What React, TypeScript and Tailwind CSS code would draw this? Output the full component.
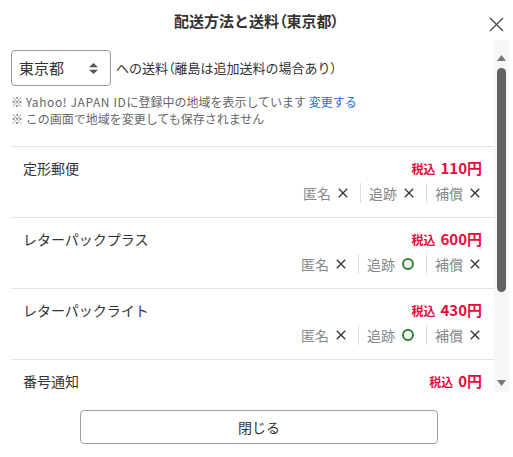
import React from "react";

const FONT = { fontFamily: '"Noto Sans CJK JP", "Noto Sans", sans-serif' };

function Cross() {
  return (
    <svg width="10" height="10" viewBox="0 0 10 10" className="shrink-0">
      <path d="M0.8 0.8 L9.2 9.2 M9.2 0.8 L0.8 9.2" stroke="#333" strokeWidth="1.3" fill="none" />
    </svg>
  );
}

function Circle() {
  return (
    <svg width="12" height="12" viewBox="0 0 12 12" className="shrink-0">
      <circle cx="6" cy="6" r="5" stroke="#2b7f2d" strokeWidth="1.9" fill="none" />
    </svg>
  );
}

type Row = { name: string; price: string; features?: [string, boolean][] };

const rows: Row[] = [
  { name: "定形郵便", price: "110円", features: [["匿名", false], ["追跡", false], ["補償", false]] },
  { name: "レターパックプラス", price: "600円", features: [["匿名", false], ["追跡", true], ["補償", false]] },
  { name: "レターパックライト", price: "430円", features: [["匿名", false], ["追跡", true], ["補償", false]] },
  { name: "番号通知", price: "0円" },
];

function P({ children }: { children: React.ReactNode }) {
  return <span className="[font-feature-settings:'palt']">{children}</span>;
}

function ShippingRow({ row }: { row: Row }) {
  return (
    <div className="border-t border-[#e3e3e3] px-3 pt-[10px] pb-[14px]">
      <div className="flex h-[22px] items-center justify-between">
        <span className="text-[14px] text-[#333]">{row.name}</span>
        <span className="flex items-baseline gap-[5px] font-bold text-[#ea0a3e]">
          <span className="text-[12px]">税込</span>
          <span className="text-[15px]">{row.price}</span>
        </span>
      </div>
      {row.features && (
        <div className="mt-[4px] flex h-[20px] items-center justify-end pr-[2px]">
          {row.features.map(([label, ok], i) => (
            <React.Fragment key={label}>
              {i > 0 && <div className="ml-[12px] mr-[8px] h-[20px] w-px bg-[#dddddd]" />}
              <span className="text-[14px] text-[#888]">{label}</span>
              <span className="ml-[7px] flex items-center">{ok ? <Circle /> : <Cross />}</span>
            </React.Fragment>
          ))}
        </div>
      )}
    </div>
  );
}

export default function App() {
  return (
    <div className="h-[457px] w-[513px] bg-white" style={FONT}>
      <div className="relative flex h-[40px] items-center justify-center">
        <h1 className="pt-[2px] text-[15px] font-bold text-[#333]">
          配送方法と送料<P>（</P>東京都<P>）</P>
        </h1>
        <button className="absolute right-[9px] top-[17px]">
          <svg width="15" height="15" viewBox="0 0 15 15">
            <path d="M1 1 L14 14 M14 1 L1 14" stroke="#555" strokeWidth="1.5" fill="none" />
          </svg>
        </button>
      </div>

      <div className="flex h-[352px] pr-[4px]">
        <div className="flex-1 overflow-hidden pl-[11px] pt-[10px]">
          <div className="flex items-center">
            <div className="flex h-[36px] w-[100px] items-center justify-between rounded-[4px] border border-[#9a9a9a] pl-[7px] pr-[12px]">
              <span className="text-[15px] text-[#333]">東京都</span>
              <svg width="9" height="11" viewBox="0 0 9 11">
                <path d="M4.5 0 L9 4.2 L0 4.2 Z M0 6.8 L9 6.8 L4.5 11 Z" fill="#555" />
              </svg>
            </div>
            <span className="ml-[5px] text-[13px] text-[#333]">
              への送料<P>（</P>離島は追加送料の場合あり<P>）</P>
            </span>
          </div>
          <div className="mt-[7px] h-[34px] text-[12px] leading-[17px] text-[#666]">
            <div>
              ※ <span className="tracking-[0.6px]">Yahoo! JAPAN ID</span>に登録中の地域を表示しています <span className="text-[#1a6fe0]">変更する</span>
            </div>
            <div>※ この画面で地域を変更しても保存されません</div>
          </div>
          <div className="mt-[19px]">
            {rows.map((r) => (
              <ShippingRow key={r.name} row={r} />
            ))}
          </div>
        </div>
        <div className="flex w-[15px] flex-col items-center bg-[#f7f7f7]">
          <svg width="9" height="6" viewBox="0 0 9 6" className="mt-[15px]">
            <path d="M4.5 0 L9 6 L0 6 Z" fill="#777" />
          </svg>
          <div className="mt-[7px] h-[224px] w-[9px] rounded-full bg-[#616161]" />
          <div className="flex-1" />
          <svg width="9" height="6" viewBox="0 0 9 6" className="mb-[6px]">
            <path d="M0 0 L9 0 L4.5 6 Z" fill="#777" />
          </svg>
        </div>
      </div>

      <div className="flex justify-center pl-[5px] pt-[18px]">
        <button className="h-[34px] w-[358px] rounded-[4px] border border-[#a0a0a0] text-[14px] text-[#333]">
          閉じる
        </button>
      </div>
    </div>
  );
}
